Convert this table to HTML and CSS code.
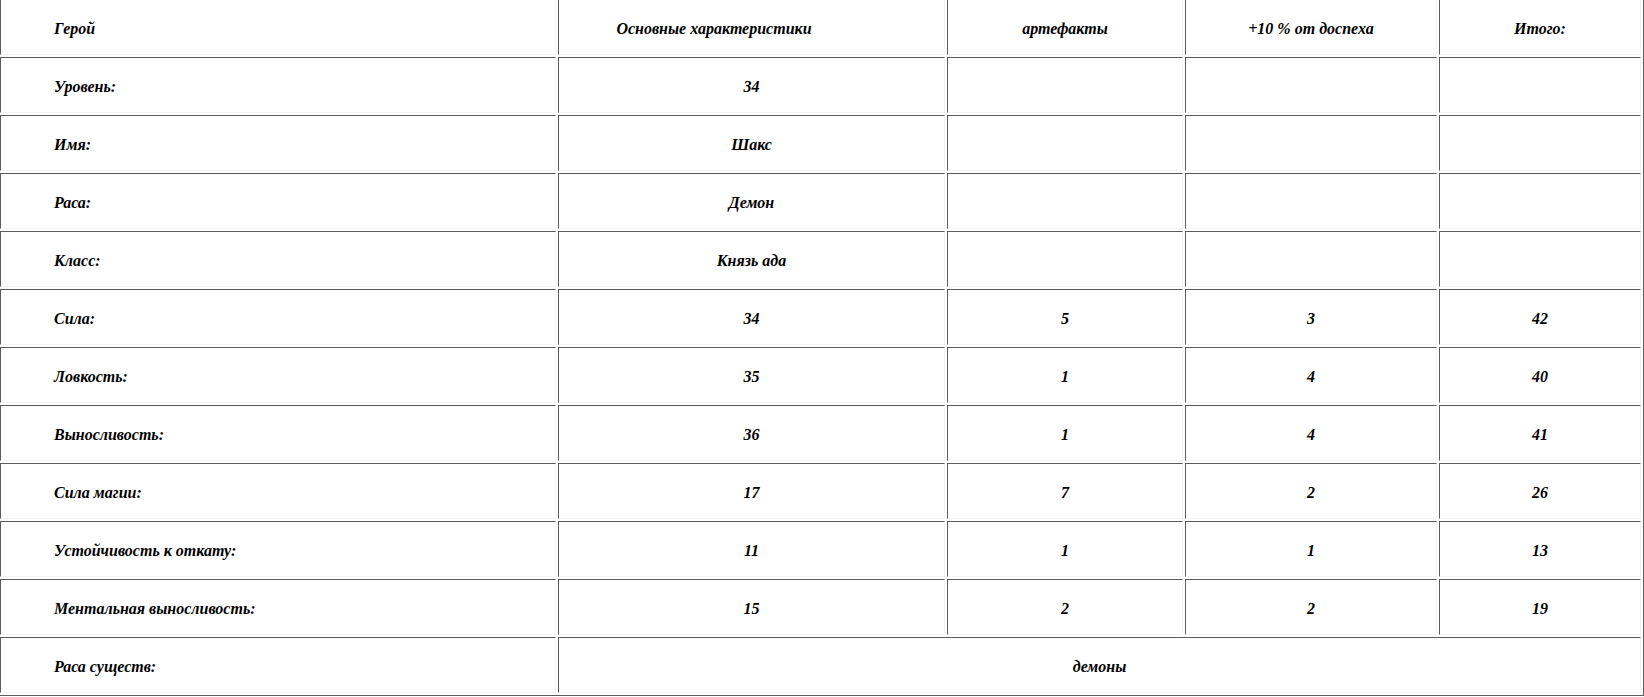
FILE: index.html
```html
<!DOCTYPE html>
<html lang="ru">
<head>
<meta charset="utf-8">
<title>Герой</title>
<link rel="stylesheet" href="styles.css">
</head>
<body>
<table class="hero">
  <thead>
    <tr>
      <th class="c1 name">Герой</th>
      <th class="c2 main-head">Основные характеристики</th>
      <th class="c3">артефакты</th>
      <th class="c4">+10 % от доспеха</th>
      <th class="c5">Итого:</th>
    </tr>
  </thead>
  <tbody>
    <tr><td class="name">Уровень:</td><td>34</td><td></td><td></td><td></td></tr>
    <tr><td class="name">Имя:</td><td>Шакс</td><td></td><td></td><td></td></tr>
    <tr><td class="name">Раса:</td><td>Демон</td><td></td><td></td><td></td></tr>
    <tr><td class="name">Класс:</td><td>Князь ада</td><td></td><td></td><td></td></tr>
    <tr><td class="name">Сила:</td><td>34</td><td>5</td><td>3</td><td>42</td></tr>
    <tr><td class="name">Ловкость:</td><td>35</td><td>1</td><td>4</td><td>40</td></tr>
    <tr><td class="name">Выносливость:</td><td>36</td><td>1</td><td>4</td><td>41</td></tr>
    <tr><td class="name">Сила магии:</td><td>17</td><td>7</td><td>2</td><td>26</td></tr>
    <tr><td class="name">Устойчивость к откату:</td><td>11</td><td>1</td><td>1</td><td>13</td></tr>
    <tr><td class="name">Ментальная выносливость:</td><td>15</td><td>2</td><td>2</td><td>19</td></tr>
    <tr><td class="name">Раса существ:</td><td colspan="4">демоны</td></tr>
  </tbody>
</table>
</body>
</html>
```
FILE: styles.css
```css
html, body {
  margin: 0;
  padding: 0;
  background: #ffffff;
  overflow: hidden;
}

.hero {
  box-sizing: border-box;
  width: 1647px;
  margin: -4px 0 0 -3px;
  table-layout: fixed;
  border-collapse: separate;
  border-spacing: 2px;
  border: 1px solid;
  border-color: #f6f6f6 #5a5a5a #5a5a5a #f6f6f6;
  font-family: "Liberation Serif", "Times New Roman", serif;
  font-size: 16px;
  font-weight: bold;
  font-style: italic;
  color: #000;
}

.hero th,
.hero td {
  box-sizing: border-box;
  height: 56px;
  padding: 3px 0 0 0;
  border: 1px solid;
  border-color: #5a5a5a #f4f4f4 #f4f4f4 #5a5a5a;
  text-align: center;
  vertical-align: middle;
  font-weight: bold;
  font-style: italic;
}

.hero .c1 { width: 556px; }
.hero .c2 { width: 387px; }
.hero .c3 { width: 236px; }
.hero .c4 { width: 252px; }
.hero .c5 { width: 202px; }

.hero .name {
  text-align: left;
  padding-left: 53px;
}

.hero .main-head {
  padding-right: 75px;
}
```
